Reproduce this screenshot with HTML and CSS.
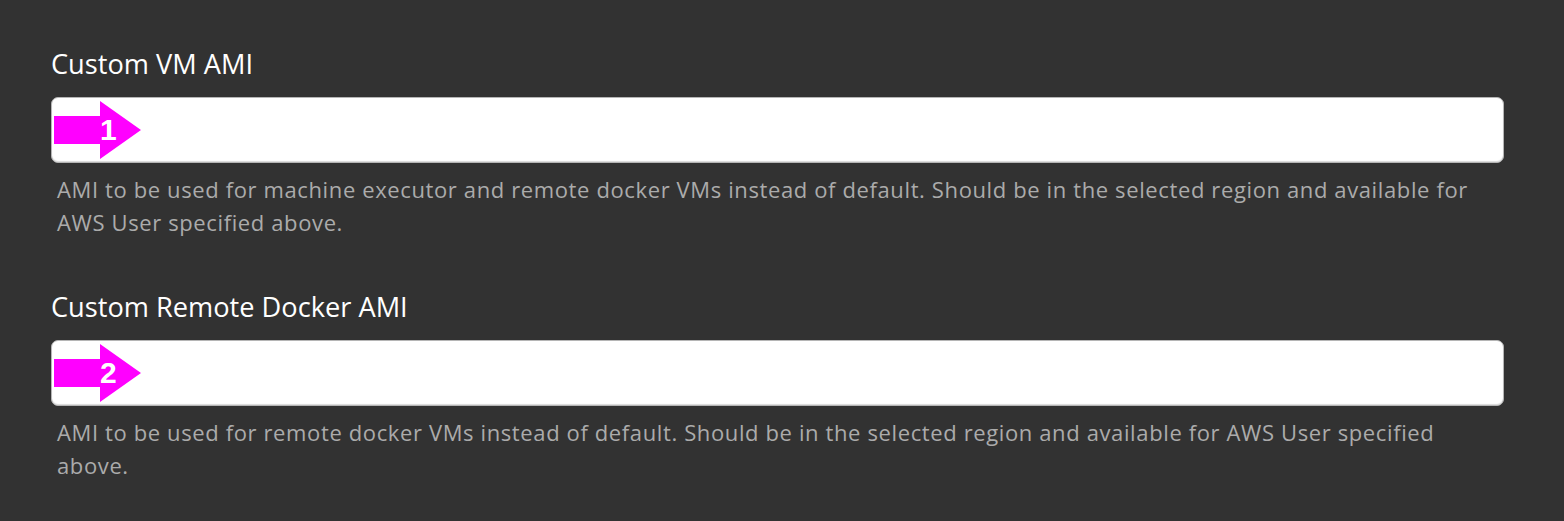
FILE: index.html
```html
<!DOCTYPE html>
<html>
<head>
<meta charset="utf-8">
<link rel="stylesheet" href="styles.css">
</head>
<body>
<div class="form">
  <div class="field">
    <label class="label">Custom VM AMI</label>
    <div class="input-wrap">
      <div class="input"></div>
      <div class="marker">
        <svg class="arrow" width="88" height="58" viewBox="0 0 88 58"><polygon points="0,15 46,15 46,0 87,29 46,58 46,43 0,43" fill="#ff00ff"/></svg>
        <span class="num">1</span>
      </div>
    </div>
    <p class="help">AMI to be used for machine executor and remote docker VMs instead of default. Should be in the selected region and available for AWS User specified above.</p>
  </div>
  <div class="field">
    <label class="label">Custom Remote Docker AMI</label>
    <div class="input-wrap">
      <div class="input"></div>
      <div class="marker">
        <svg class="arrow" width="88" height="58" viewBox="0 0 88 58"><polygon points="0,15 46,15 46,0 87,29 46,58 46,43 0,43" fill="#ff00ff"/></svg>
        <span class="num">2</span>
      </div>
    </div>
    <p class="help">AMI to be used for remote docker VMs instead of default. Should be in the selected region and available for AWS User specified above.</p>
  </div>
</div>
</body>
</html>
```
FILE: styles.css
```css
html, body {
  margin: 0;
  padding: 0;
  background: #323232;
}
body {
  font-family: "Open Sans", "Noto Sans", sans-serif;
}
.form {
  padding: 46px 60px 0 51px;
  display: flex;
  flex-direction: column;
  gap: 50px;
}
.field {
  display: flex;
  flex-direction: column;
}
.label {
  display: block;
  color: #ffffff;
  font-size: 27.2px;
  line-height: 36px;
  margin-bottom: 15px;
}
.input-wrap {
  position: relative;
}
.input {
  box-sizing: border-box;
  height: 66px;
  width: 100%;
  background: #ffffff;
  border: 1px solid #b5b5b5;
  border-radius: 7px;
  box-shadow: inset 0 -1px 1px rgba(0,0,0,0.15);
}
.marker {
  position: absolute;
  left: 3px;
  top: 4px;
  width: 88px;
  height: 58px;
}
.arrow {
  display: block;
}
.num {
  position: absolute;
  left: 46px;
  top: 13px;
  color: #ffffff;
  font-family: "Liberation Sans", Arial, sans-serif;
  font-weight: bold;
  font-size: 30px;
  line-height: 32px;
}
.help {
  margin: 10px 14px 0 6px;
  color: #ababab;
  font-size: 22px;
  letter-spacing: 0.62px;
  line-height: 33px;
}
```
